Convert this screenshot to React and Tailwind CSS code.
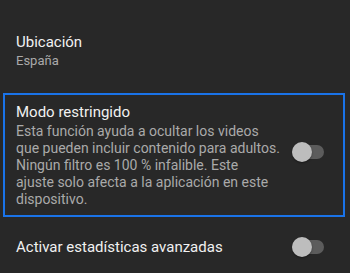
function Toggle() {
  return (
    <div className="relative flex h-5 w-[32px] shrink-0 items-center">
      <div className="h-[14px] w-full rounded-full bg-[#5c5c5c]" />
      <div className="absolute left-0 top-0 h-5 w-5 rounded-full bg-[#bdbdbd] shadow-[0_1px_2px_rgba(0,0,0,0.4)]" />
    </div>
  );
}

export default function App() {
  return (
    <div className="h-[273px] w-full overflow-hidden bg-[#282828] font-['Roboto',sans-serif]">
      <div className="pl-4 pt-[32px]">
        <div className="text-[15px] leading-[20px] text-[#f1f1f1]">Ubicación</div>
        <div className="text-[13px] leading-[18px] text-[#aaaaaa]">España</div>
      </div>

      <div className="ml-[3px] mr-[5px] mt-[23px] flex items-center border-2 border-[#1a73e8] pb-[7px] pl-[11px] pr-[19px] pt-[7px]">
        <div className="w-[262px]">
          <div className="text-[15px] leading-[20px] text-[#f1f1f1]">Modo restringido</div>
          <p className="mt-px whitespace-nowrap text-[14px] leading-[17px] text-[#aaaaaa]">
            Esta función ayuda a ocultar los videos
            <br />
            que pueden incluir contenido para adultos.
            <br />
            Ningún filtro es 100 % infalible. Este
            <br />
            ajuste solo afecta a la aplicación en este
            <br />
            dispositivo.
          </p>
        </div>
        <div className="ml-auto -mt-[6px]">
          <Toggle />
        </div>
      </div>

      <div className="flex h-[60px] items-center pl-4 pr-[26px]">
        <div className="text-[15px] leading-[20px] text-[#f1f1f1]">Activar estadísticas avanzadas</div>
        <div className="ml-auto">
          <Toggle />
        </div>
      </div>
    </div>
  );
}
